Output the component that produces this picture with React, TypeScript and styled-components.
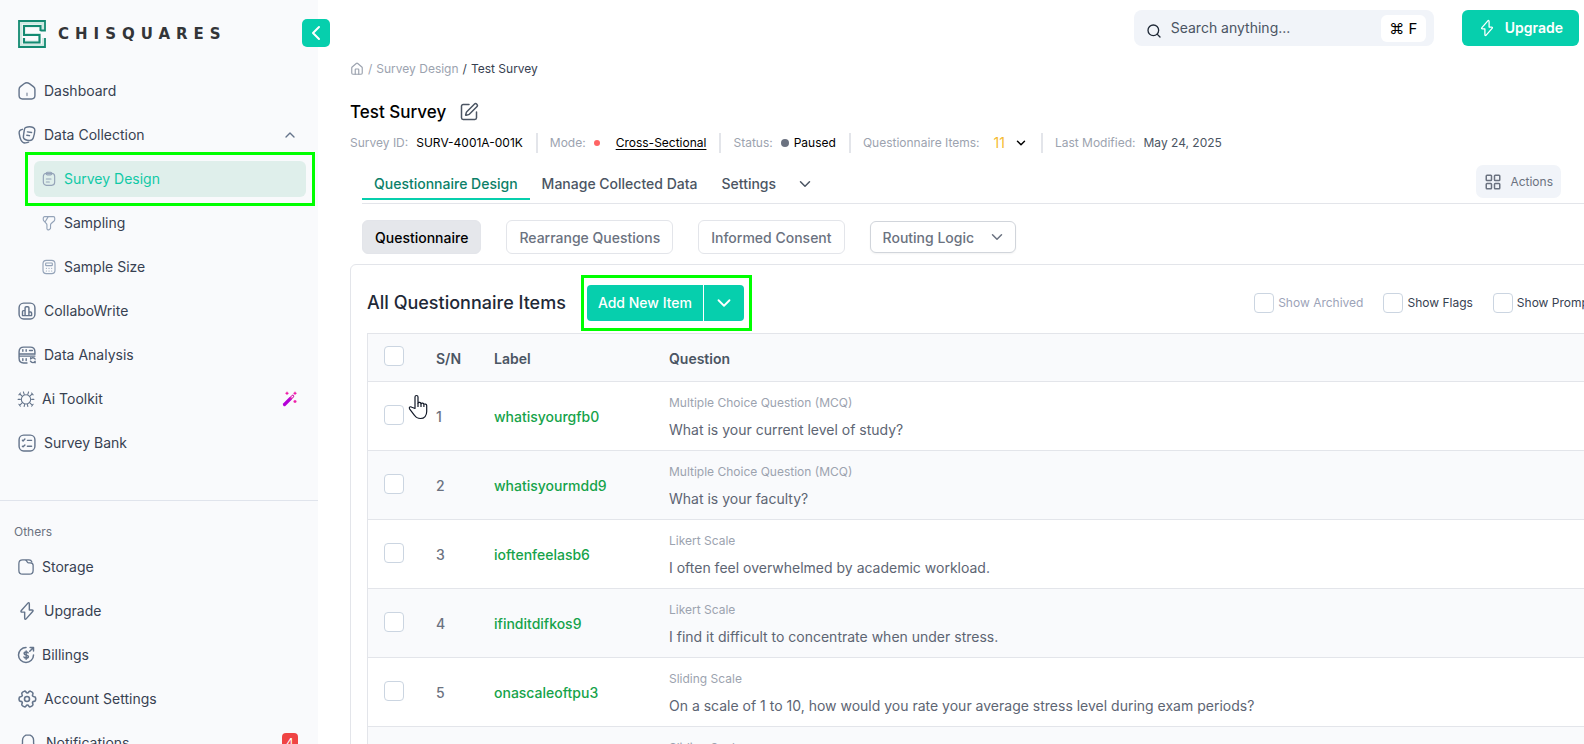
import React from 'react';
import styled, { createGlobalStyle, css } from 'styled-components';
import { ChevronDown, ChevronLeft, ChevronUp, LayoutGrid, Search, SquarePen, House } from 'lucide-react';

const brand = '#06cfad';
const line = '#e3e5ea';
const tint = '#f9fafc';
const highlight = '#00ff00';

const GlobalStyle = createGlobalStyle`
  *, *::before, *::after { box-sizing: border-box; }
  body {
    margin: 0;
    background: #fff;
    color: #374151;
    font: 400 14px/20px Inter, "Liberation Sans", sans-serif;
  }
  button, input, select { font: inherit; color: inherit; }
  button { border: 0; background: none; padding: 0; cursor: pointer; }
  a { color: inherit; text-decoration: none; }
  h1, h2, ul { margin: 0; padding: 0; }
  ul { list-style: none; }
`;

/* ---------- shell ---------- */

const Shell = styled.div`
  position: relative;
  display: flex;
  height: 100vh;
  overflow: hidden;
`;

const Sidebar = styled.aside`
  position: relative;
  flex: 0 0 318px;
  background: ${tint};
`;

const Main = styled.main`
  flex: 1;
  min-width: 0;
  padding-left: 32px;
  overflow: hidden;
`;

/* ---------- sidebar ---------- */

const Brand = styled.a`
  display: flex;
  align-items: center;
  gap: 12px;
  height: 69px;
  padding: 0 0 2px 18px;
`;

const Wordmark = styled.span`
  color: #333538;
  font: 700 15px/20px "DejaVu Sans", sans-serif;
  letter-spacing: 6px;
`;

const CollapseButton = styled.button`
  position: absolute;
  top: 19px;
  right: -12px;
  display: grid;
  place-items: center;
  width: 28px;
  height: 28px;
  border-radius: 5px;
  background: ${brand};
  color: #fff;
`;

const NavLink = styled.a`
  display: flex;
  align-items: center;
  gap: 7px;
  height: 44px;
  padding: 0 20px 0 17px;

  svg { flex: none; color: #64748b; }
`;

const NavEnd = styled.span`
  display: flex;
  margin-left: auto;
`;

const SubNavItem = styled.li`
  padding: 4px 12px 4px 34px;
`;

const SubLink = styled.a<{ $active?: boolean }>`
  position: relative;
  display: flex;
  align-items: center;
  gap: 7px;
  height: 36px;
  padding-left: 7px;
  border-radius: 6px;

  svg { flex: none; color: #94a3b8; }

  ${({ $active }) => $active && css`
    background: #dfefeb;
    color: #10c9a6;

    &::after {
      content: '';
      position: absolute;
      inset: -9px;
      border: 3px solid ${highlight};
    }
  `}
`;

const Divider = styled.hr`
  height: 1px;
  margin: 35px 0 22px;
  border: 0;
  background: #e0e4ec;
`;

const GroupLabel = styled.h2`
  margin-bottom: 4px;
  padding-left: 14px;
  color: #6b7280;
  font-size: 12px;
  font-weight: 400;
  line-height: 18px;
`;

const Badge = styled.span`
  width: 16px;
  height: 20px;
  border-radius: 4px;
  background: #ef4444;
  color: #fff;
  font-size: 12px;
  text-align: center;
`;

/* ---------- header ---------- */

const TopBar = styled.header`
  display: flex;
  justify-content: flex-end;
  gap: 28px;
  padding: 10px 5px 0 0;
`;

const SearchBox = styled.label`
  display: flex;
  align-items: center;
  gap: 9px;
  width: 300px;
  height: 36px;
  padding: 0 8px 0 12px;
  border-radius: 8px;
  background: #f1f4f9;
  color: #1f2937;

  svg { flex: none; margin-top: 6px; }
`;

const SearchInput = styled.input`
  flex: 1;
  min-width: 0;
  padding: 0;
  border: 0;
  outline: 0;
  background: none;

  &::placeholder { color: #4b5563; opacity: 1; }
`;

const Shortcut = styled.kbd`
  width: 45px;
  height: 27px;
  border-radius: 6px;
  background: #fff;
  color: #000;
  font: 400 15px/27px Inter, "DejaVu Sans", sans-serif;
  text-align: center;
`;

const UpgradeButton = styled.button`
  display: flex;
  align-items: center;
  gap: 9px;
  height: 36px;
  padding: 0 16px;
  border-radius: 6px;
  background: ${brand};
  color: #fff;
  font-weight: 600;
`;

const Breadcrumb = styled.nav`
  display: flex;
  align-items: center;
  gap: 4px;
  margin-top: 15px;
  color: #9ca3af;
  font-size: 12px;
  line-height: 16px;

  span { color: #374151; }
`;

const TitleRow = styled.div`
  display: flex;
  align-items: center;
  gap: 13px;
  margin-top: 23px;

  button { display: flex; color: #4b5563; }
`;

const Title = styled.h1`
  color: #000;
  font-size: 17px;
  font-weight: 500;
  line-height: 24px;
`;

const MetaRow = styled.div`
  display: flex;
  align-items: center;
  height: 20px;
  margin-top: 9px;
  color: #9ca3af;
  font-size: 12px;
  white-space: nowrap;
`;

const MetaItem = styled.div`
  display: flex;
  align-items: center;
  gap: 8px;

  & + & {
    margin-left: 13px;
    padding-left: 12px;
    border-left: 2px solid #e3e5ea;
  }
`;

const MetaValue = styled.span<{ $muted?: boolean }>`
  color: ${({ $muted }) => ($muted ? '#4b5563' : '#000')};
`;

const MetaLink = styled.a`
  margin-left: 8px;
  color: #000;
  text-decoration: underline;
  text-underline-offset: 2px;
`;

const Dot = styled.i<{ $color: string; $size: number }>`
  width: ${({ $size }) => $size}px;
  height: ${({ $size }) => $size}px;
  border-radius: 50%;
  background: ${({ $color }) => $color};
`;

const Status = styled.span`
  display: flex;
  align-items: center;
  gap: 5px;
  color: #000;
`;

const CountButton = styled.button`
  display: flex;
  align-items: center;
  gap: 9px;
  margin: 0 0 0 6px;
  color: #f5bb2f;
  font-size: 14px;

  svg { color: #000; }
`;

/* ---------- tabs ---------- */

const TabBar = styled.div`
  display: flex;
  align-items: flex-start;
  height: 39px;
  margin: 12px 0 0 12px;
  padding-right: 23px;
  border-bottom: 1px solid ${line};
`;

const Tab = styled.button<{ $active?: boolean }>`
  display: flex;
  align-items: center;
  gap: 20px;
  height: 35px;
  padding: 4px 12px 0;
  border-bottom: 2px solid ${({ $active }) => ($active ? brand : 'transparent')};
  color: ${({ $active }) => ($active ? '#0b8068' : '#4b5563')};
  font-weight: 500;
  white-space: nowrap;
`;

const ActionsButton = styled.button`
  display: flex;
  align-items: center;
  gap: 8px;
  height: 33px;
  margin-left: auto;
  padding: 0 8px;
  border-radius: 7px;
  background: #f1f4f9;
  color: #6b7280;
  font-size: 12px;
`;

const SubTabs = styled.div`
  display: flex;
  align-items: center;
  gap: 25px;
  margin: 16px 0 10px 12px;
`;

const SubTab = styled.button<{ $active?: boolean }>`
  height: 34px;
  padding: 1px 12px 0;
  border: 1px solid ${line};
  border-radius: 6px;
  background: ${({ $active }) => ($active ? '#e5e7eb' : '#fff')};
  color: ${({ $active }) => ($active ? '#000' : '#6b7280')};
  font-weight: 500;
  white-space: nowrap;
`;

const SelectWrap = styled.span`
  position: relative;
  display: flex;
  align-items: center;
  color: #6b7280;

  svg { position: absolute; right: 10px; pointer-events: none; }
`;

const RoutingSelect = styled.select`
  appearance: none;
  width: 146px;
  height: 32px;
  padding: 1px 32px 0 12px;
  border: 1px solid #d1d5db;
  border-radius: 6px;
  background: #fff;
  box-shadow: 0 1px 2px rgba(0, 0, 0, 0.05);
  font-weight: 500;
`;

/* ---------- questionnaire panel ---------- */

const Panel = styled.section`
  margin-right: -40px;
  padding-left: 16px;
  border: 1px solid ${line};
  border-radius: 6px 0 0 0;
`;

const PanelHead = styled.div`
  display: flex;
  align-items: center;
  height: 68px;
  padding: 10px 24px 2px 0;
`;

const PanelTitle = styled.h2`
  color: #1f2937;
  font-size: 18px;
  font-weight: 500;
  line-height: 24px;
  white-space: nowrap;
`;

const SplitHighlight = styled.div`
  display: flex;
  margin-left: 15px;
  padding: 7px 5px 7px 3px;
  border: 3px solid ${highlight};
`;

const AddButton = styled.button`
  height: 36px;
  padding: 0 11px;
  border-radius: 4px 0 0 4px;
  background: ${brand};
  color: #fff;
  font-weight: 500;
  white-space: nowrap;
`;

const AddMenuButton = styled.button`
  display: grid;
  place-items: center;
  width: 41px;
  height: 36px;
  border-left: 1px solid #fff;
  border-radius: 0 4px 4px 0;
  background: ${brand};
  color: #fff;
`;

const Filters = styled.div`
  display: flex;
  gap: 20px;
  margin-left: auto;
`;

const Filter = styled.label<{ $muted?: boolean }>`
  display: flex;
  align-items: center;
  gap: 4px;
  color: ${({ $muted }) => ($muted ? '#9ca3b8' : '#374151')};
  font-size: 12px;
  white-space: nowrap;
`;

const Checkbox = styled.input.attrs({ type: 'checkbox' })`
  appearance: none;
  display: block;
  width: 20px;
  height: 20px;
  margin: 0;
  border: 1px solid #cbd5e1;
  border-radius: 4px;
  background: #fff;

  &:checked { background: ${brand}; }
`;

const Table = styled.table`
  width: 100%;
  table-layout: fixed;
  border: 1px solid ${line};
  border-width: 1px 0 0 1px;
  border-spacing: 0;
  text-align: left;
`;

const HeadCell = styled.th<{ $width?: number }>`
  width: ${({ $width }) => ($width ? `${$width}px` : 'auto')};
  height: 48px;
  padding: 2px 16px 0;
  border-bottom: 1px solid ${line};
  background: ${tint};
  color: #4b5563;
  font-weight: 600;

  input { margin-bottom: 6px; }
`;

const Row = styled.tr`
  &:nth-child(even) { background: ${tint}; }
`;

const Cell = styled.td`
  height: 69px;
  padding: 2px 16px 0;
  border-bottom: 1px solid ${line};
  color: #6b7280;
  font-weight: 500;
  white-space: nowrap;

  input { margin-bottom: 4px; }
`;

const ItemLink = styled.a`
  color: #16a34a;
`;

const Kind = styled.div`
  margin-bottom: 9px;
  color: #9ca3af;
  font-size: 12px;
  font-weight: 400;
  line-height: 16px;
`;

const Prompt = styled.div`
  color: #5d6573;
  font-weight: 400;
`;

const Pointer = styled.svg`
  position: absolute;
  top: 394px;
  left: 408px;
  pointer-events: none;
`;

/* ---------- icons ---------- */

const Icon: React.FC<{ size?: number; width?: number; children: React.ReactNode }> = ({ size = 20, width = 1.7, children }) => (
  <svg width={size} height={size} viewBox="0 0 24 24" fill="none" stroke="currentColor" strokeWidth={width} strokeLinecap="round" strokeLinejoin="round" aria-hidden="true">
    {children}
  </svg>
);

const Frame = () => <rect x="2.5" y="2.5" width="19" height="19" rx="5.5" />;

const Bolt: React.FC<{ size?: number }> = ({ size }) => (
  <Icon size={size}><path d="M6.1 13.3h3.1v7.2c0 1.7.9 2 2 .7l7.6-8.6c.9-1 .5-1.9-.9-1.9h-3.1V3.5c0-1.700-.9-2-2-.7l-7.600 8.600c-.9 1.100-.5 1.900.9 1.900z" /></Icon>
);

const icons = {
  home: <Icon><path d="M8.500 3.300 4 6.800C3 7.600 2.500 9 2.500 10.200v7.300c0 2.300 1.700 4 4 4h11c2.300 0 4-1.700 4-4v-7.200c0-1.300-.7-2.700-1.800-3.500l-4.800-3.600c-1.800-1.300-4.600-1.300-6.400.100z" /><path d="M12 17.500v-3" opacity=".7" /></Icon>,
  collection: <Icon><path d="M10 3.200c3-1.200 7-1.200 9.300-.2 1.600.7 2.200 1.700 2.100 3.400-.2 3-.8 6.300-1.900 9.200-.9 2.300-2.200 3.200-4.700 3-1.700-.1-3.500-.5-5-1.200-1.800-.8-2.400-1.900-2.100-3.800.3-2.700.6-4.700 1-7.200.3-1.700.5-2.800 1.300-3.200z" /><path d="M6.500 5.200C3.300 5.800 2.200 7 2.600 10c.4 2.800 1 5.700 2.300 8.300 1.200 2.400 2.700 3.400 5.200 3.200 1.400-.1 2.600-.4 3.800-.9" /><path d="m12.500 8.300 5 .7M11.800 12.300l3.200.500" /></Icon>,
  survey: <Icon size={16}><rect x="3.500" y="3.500" width="17" height="18" rx="4.500" /><rect x="8" y="1.800" width="8" height="4" rx="1.500" /><path d="M8 12h7M8 16.500h4.500" /></Icon>,
  funnel: <Icon size={16}><path d="M5.400 2.500h13.200c1.100 0 2 .9 2 2v2.200c0 .8-.5 1.800-1 2.300l-4.300 3.800c-.6.5-1 1.500-1 2.300v4.300c0 .6-.4 1.400-.9 1.700l-1.400.9c-1.300.8-3.100-.1-3.100-1.700v-5.300c0-.7-.4-1.600-.8-2.100L4.300 8.900c-.5-.5-.9-1.400-.9-2V4.600c0-1.200.9-2.100 2-2.100zM10.900 2.500 6 10.400" /></Icon>,
  calculator: <Icon size={16}><rect x="3" y="2" width="18" height="20" rx="5" /><rect x="7" y="6" width="10" height="4" rx="1" /><path d="M8 14h.1M12 14h.1M16 14h.1M8 18h.1M12 18h.1M16 18h.1" /></Icon>,
  chart: <Icon><Frame /><path d="M9.700 17.500V8.200c0-.9.500-1.400 1.400-1.400h1.800c.9 0 1.400.5 1.400 1.400v9.300zM9.700 11.500H7.800c-.8 0-1.200.4-1.200 1.200v4.800h3.100M14.300 13.200h2c.8 0 1.200.4 1.200 1.200v3.100h-3.200" /></Icon>,
  database: <Icon><path d="M21.500 11V8c0-3.500-2-5.500-5.500-5.500H8C4.500 2.500 2.500 4.500 2.500 8v8c0 3.500 2 5.500 5.500 5.500h4M2.500 10.700h19M2.500 13.300h19M7 5.500v2M11 5.500v2M15 6.500h3.500M7 16.500v2M11 16.500v2M21.700 16.800c-.5-1-1.500-1.600-2.700-1.600-1.700 0-2.600 1.500-2.600 1.500v-1.500M16.200 19.400c.5 1 1.500 1.700 2.800 1.700 1.700 0 2.700-1.500 2.700-1.500v1.700" /></Icon>,
  bug: <Icon size={18} width={1.4}><circle cx="12" cy="12.500" r="6.200" /><path d="M1.500 12.500h3M19.500 12.500h3M3.500 5l3.300 3.200M20.500 5l-3.300 3.200M3.500 20.500l3.300-3.300M20.500 20.500l-3.300-3.300M8.500 2.500l1.200 3.500M15.500 2.500 14.300 6M9.500 22l.7-2.800M14.500 22l-.7-2.800M2.500 6.500 4.500 4M21.500 6.500 19.500 4M2.500 19l2 2.500M21.500 19l-2 2.500" /></Icon>,
  tasks: <Icon><Frame /><path d="M12.500 8.800h5M6.500 8.800l.8.800L9.500 7.300M12.500 15.800h5M6.500 15.800l.8.800 2.200-2.300" /></Icon>,
  folder: <Icon size={18}><path d="M21.500 9.500v7c0 3.500-1.500 5-5 5h-9c-3.500 0-5-1.500-5-5v-9c0-3.500 1.500-5 5-5h3c1.200 0 1.700.7 2.300 1.500l1 1.400c.4.600.800 1.100 1.700 1.100h2c2.700 0 4 1 4 3zM10.500 2.500H16c2 0 3.200.9 3.800 2.700" /></Icon>,
  bolt: <Bolt />,
  billing: <Icon size={18} width={2}><path d="M14.800 9.200c-.4-.9-1.300-1.300-2.600-1.300-1.600 0-2.700.7-2.700 2 0 2.900 5.700 1.200 5.700 4.200 0 1.300-1.200 2.100-2.900 2.100-1.500 0-2.500-.5-3-1.500M12.200 6.500v11" /><path d="M22 12c0 5.500-4.500 10-10 10S2 17.500 2 12 6.500 2 12 2M17 7l5-5M17.500 2H22v4.500" /></Icon>,
  gear: <Icon width={1.900}><circle cx="12" cy="12" r="3" /><path d="M2.500 12.900v-1.800c0-1 .9-1.900 1.900-1.900 1.800 0 2.500-1.300 1.600-2.800-.5-.9-.2-2.100.7-2.600l1.700-1c.8-.5 1.800-.2 2.300.6l.1.200c.9 1.600 2.400 1.600 3.300 0l.1-.2c.5-.8 1.500-1.100 2.300-.6l1.700 1c.9.5 1.200 1.700.7 2.600-.9 1.500-.2 2.800 1.600 2.800 1 0 1.900.9 1.900 1.900v1.800c0 1-.9 1.900-1.900 1.900-1.800 0-2.500 1.300-1.600 2.800.5.900.2 2.100-.7 2.600l-1.700 1c-.8.500-1.800.2-2.300-.6l-.1-.2c-.9-1.600-2.400-1.600-3.300 0l-.1.200c-.5.800-1.500 1.100-2.300.6l-1.700-1c-.9-.5-1.200-1.700-.7-2.600.9-1.500.2-2.800-1.600-2.800-1 0-1.900-.9-1.900-1.900z" /></Icon>,
  bell: <Icon size={22} width={1.5}><path d="M12 3c-3.300 0-6 2.700-6 6v2.900c0 .6-.3 1.500-.6 2l-1.100 1.900c-.7 1.200-.2 2.500 1.100 2.900 4.300 1.400 9 1.400 13.300 0 1.200-.4 1.800-1.800 1.100-2.900l-1.100-1.900c-.3-.5-.6-1.400-.6-2V9c0-3.300-2.800-6-6.100-6z" /></Icon>,
};

const Wand = () => (
  <svg width="16" height="16" viewBox="0 0 16 16" fill="none" aria-hidden="true">
    <path d="m2.500 13.500 6-6" stroke="#b400d8" strokeWidth="3.200" strokeLinecap="round" />
    <path d="m9 7 1.800-1.800" stroke="#d81fb4" strokeWidth="3" strokeLinecap="round" />
    <path d="m9.800 6.200.8-.8" stroke="#fff" strokeWidth="1.200" strokeLinecap="round" />
    <path d="M5 .8v3M3.500 2.300h3M13 .800v3M11.500 2.300h3M13 9v3M11.500 10.500h3" stroke="#ef1fa8" strokeWidth="1.300" />
  </svg>
);

const Logo = () => (
  <svg width="28" height="28" viewBox="0 0 28 28" fill="none" aria-hidden="true">
    <path d="M25 10.500V2.500H2.500v23h23V18M23 10.500V6H6v8.500h15.500V22H6v-4" stroke="#cfe9e2" strokeWidth="3" />
    <path d="M22.500 10.500H27V1H1v26h26v-9" stroke="#138a72" strokeWidth="1.800" />
    <path d="M22.500 11V6H6v9h15.500v7.500H6V18" stroke="#138a72" strokeWidth="2" />
  </svg>
);

/* ---------- data ---------- */

type NavEntry = { icon: keyof typeof icons; label: string; end?: React.ReactNode };

const surveyLinks: NavEntry[] = [
  { icon: 'survey', label: 'Survey Design' },
  { icon: 'funnel', label: 'Sampling' },
  { icon: 'calculator', label: 'Sample Size' },
];

const toolLinks: NavEntry[] = [
  { icon: 'chart', label: 'CollaboWrite' },
  { icon: 'database', label: 'Data Analysis' },
  { icon: 'bug', label: 'Ai Toolkit', end: <Wand /> },
  { icon: 'tasks', label: 'Survey Bank' },
];

const otherLinks: NavEntry[] = [
  { icon: 'folder', label: 'Storage' },
  { icon: 'bolt', label: 'Upgrade' },
  { icon: 'billing', label: 'Billings' },
  { icon: 'gear', label: 'Account Settings' },
  { icon: 'bell', label: 'Notifications', end: <Badge>4</Badge> },
];

const questions = [
  { label: 'whatisyourgfb0', kind: 'Multiple Choice Question (MCQ)', text: 'What is your current level of study?' },
  { label: 'whatisyourmdd9', kind: 'Multiple Choice Question (MCQ)', text: 'What is your faculty?' },
  { label: 'ioftenfeelasb6', kind: 'Likert Scale', text: 'I often feel overwhelmed by academic workload.' },
  { label: 'ifinditdifkos9', kind: 'Likert Scale', text: 'I find it difficult to concentrate when under stress.' },
  { label: 'onascaleoftpu3', kind: 'Sliding Scale', text: 'On a scale of 1 to 10, how would you rate your average stress level during exam periods?' },
  { label: '', kind: 'Sliding Scale', text: '\u00a0' },
];

const NavItem: React.FC<NavEntry> = ({ icon, label, end }) => (
  <li>
    <NavLink href="#">
      {icons[icon]}
      {label}
      {end && <NavEnd>{end}</NavEnd>}
    </NavLink>
  </li>
);

const App: React.FC = () => (
  <Shell>
    <GlobalStyle />
    <Sidebar>
      <Brand href="#">
        <Logo />
        <Wordmark>CHISQUARES</Wordmark>
      </Brand>
      <CollapseButton aria-label="Collapse sidebar"><ChevronLeft size={24} /></CollapseButton>
      <nav>
        <ul>
          <NavItem icon="home" label="Dashboard" />
          <NavItem icon="collection" label="Data Collection" end={<ChevronUp size={16} />} />
          {surveyLinks.map(({ icon, label }, i) => (
            <SubNavItem key={label}>
              <SubLink href="#" $active={i === 0}>{icons[icon]}{label}</SubLink>
            </SubNavItem>
          ))}
          {toolLinks.map((entry) => <NavItem key={entry.label} {...entry} />)}
        </ul>
        <Divider />
        <GroupLabel>Others</GroupLabel>
        <ul>
          {otherLinks.map((entry) => <NavItem key={entry.label} {...entry} />)}
        </ul>
      </nav>
    </Sidebar>

    <Main>
      <TopBar>
        <SearchBox>
          <Search size={16} />
          <SearchInput placeholder="Search anything..." aria-label="Search anything" />
          <Shortcut>⌘ F</Shortcut>
        </SearchBox>
        <UpgradeButton><Bolt size={18} />Upgrade</UpgradeButton>
      </TopBar>

      <Breadcrumb aria-label="Breadcrumb">
        <House size={14} />/<a href="#">Survey Design</a><span>/</span><span>Test Survey</span>
      </Breadcrumb>

      <TitleRow>
        <Title>Test Survey</Title>
        <button aria-label="Edit title"><SquarePen size={20} strokeWidth={1.8} /></button>
      </TitleRow>

      <MetaRow>
        <MetaItem>Survey ID: <MetaValue>SURV-4001A-001K</MetaValue></MetaItem>
        <MetaItem>Mode: <Dot $color="#ff6464" $size={6} /><MetaLink href="#">Cross-Sectional</MetaLink></MetaItem>
        <MetaItem>Status: <Status><Dot $color="#6b7280" $size={8} />Paused</Status></MetaItem>
        <MetaItem>Questionnaire Items: <CountButton>11<ChevronDown size={14} strokeWidth={2.5} /></CountButton></MetaItem>
        <MetaItem>Last Modified: <MetaValue $muted>May 24, 2025</MetaValue></MetaItem>
      </MetaRow>

      <TabBar>
        <Tab $active>Questionnaire Design</Tab>
        <Tab>Manage Collected Data</Tab>
        <Tab>Settings<ChevronDown size={18} /></Tab>
        <ActionsButton><LayoutGrid size={18} />Actions</ActionsButton>
      </TabBar>

      <SubTabs>
        <SubTab $active>Questionnaire</SubTab>
        <SubTab>Rearrange Questions</SubTab>
        <SubTab>Informed Consent</SubTab>
        <SelectWrap>
          <RoutingSelect aria-label="Routing Logic"><option>Routing Logic</option></RoutingSelect>
          <ChevronDown size={18} />
        </SelectWrap>
      </SubTabs>

      <Panel>
        <PanelHead>
          <PanelTitle>All Questionnaire Items</PanelTitle>
          <SplitHighlight>
            <AddButton>Add New Item</AddButton>
            <AddMenuButton aria-label="More item types"><ChevronDown size={22} /></AddMenuButton>
          </SplitHighlight>
          <Filters>
            <Filter $muted><Checkbox />Show Archived</Filter>
            <Filter><Checkbox />Show Flags</Filter>
            <Filter><Checkbox />Show Prompts</Filter>
          </Filters>
        </PanelHead>
        <Table>
          <thead>
            <tr>
              <HeadCell $width={52}><Checkbox aria-label="Select all" /></HeadCell>
              <HeadCell $width={58}>S/N</HeadCell>
              <HeadCell $width={175}>Label</HeadCell>
              <HeadCell>Question</HeadCell>
            </tr>
          </thead>
          <tbody>
            {questions.map(({ label, kind, text }, i) => (
              <Row key={i}>
                <Cell><Checkbox aria-label={`Select item ${i + 1}`} /></Cell>
                <Cell>{i + 1}</Cell>
                <Cell><ItemLink href="#">{label}</ItemLink></Cell>
                <Cell><Kind>{kind}</Kind><Prompt>{text}</Prompt></Cell>
              </Row>
            ))}
          </tbody>
        </Table>
      </Panel>
    </Main>

    <Pointer width="22" height="26" viewBox="0 0 22 26" aria-hidden="true">
      <path d="M7 14.500V3c0-2 3-2 3 0v6c.5-1 2.800-.8 3 .6.700-.9 2.600-.6 2.900.7.900-.6 2.800-.2 2.800 1.300v5.900c0 4-2.300 7-6.200 7-3 0-4.700-1-6-3.200l-4.800-6.200c-1.200-2 .7-3 2.200-1.800z" fill="#fff" stroke="#111827" strokeWidth="1.200" strokeLinejoin="round" />
      <path d="M10 9v4M13 9.600V13M15.900 10.500V13" stroke="#111827" strokeWidth="1.200" />
    </Pointer>
  </Shell>
);

export default App;
